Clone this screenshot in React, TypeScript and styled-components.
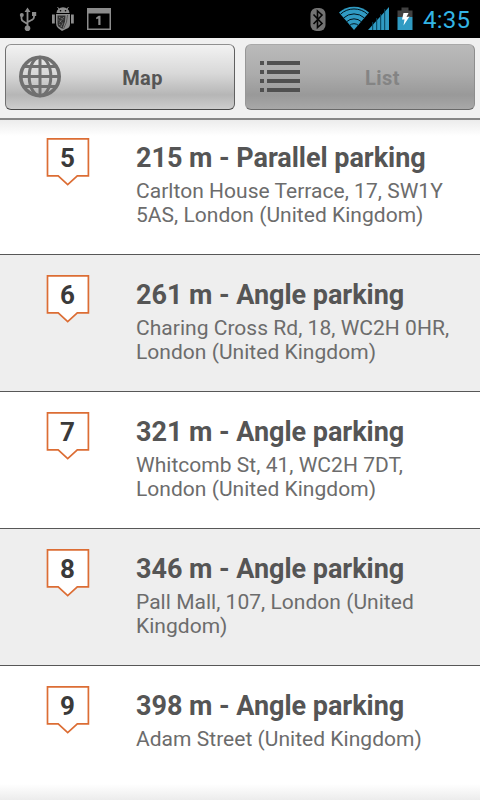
import React from "react";
import styled, { createGlobalStyle } from "styled-components";

const GlobalStyle = createGlobalStyle`
  * { box-sizing: border-box; }
  body { margin: 0; background: #fff; font-family: Roboto, "Liberation Sans", sans-serif; }
`;

const Screen = styled.div`
  width: 480px;
  height: 800px;
  display: flex;
  flex-direction: column;
  overflow: hidden;
  background: #fff;
`;

const StatusBar = styled.header`
  height: 38px;
  flex: none;
  display: flex;
  justify-content: space-between;
  background: #000;
`;

const StatusGroup = styled.div`
  display: flex;
  height: 38px;
`;

const Clock = styled.time`
  width: 57px;
  font-size: 24px;
  line-height: 40px;
  letter-spacing: 0.2px;
  color: #33b5e5;
`;

const Tabs = styled.nav`
  height: 82px;
  flex: none;
  display: flex;
  gap: 10px;
  padding: 6px 5px 8px;
  background: #f0f0f0;
  border-bottom: 2px solid #868686;
`;

const Tab = styled.button<{ $active: boolean }>`
  width: 230px;
  height: 66px;
  display: flex;
  align-items: center;
  padding: 0 0 0 13px;
  border: 1px solid;
  border-color: ${(p) => (p.$active ? "#a9a9a9 #8d8d8d #696969 #979797" : "#909090 #606060 #484848 #707070")};
  border-radius: 6px;
  background: ${(p) =>
    p.$active
      ? "linear-gradient(#bababa 0%, #acacac 45%, #999 78%, #a8a8a8 100%)"
      : "linear-gradient(#f2f2f2 0%, #d8d8d8 45%, #b6b6b6 78%, #cdcdcd 100%)"};
  color: ${(p) => (p.$active ? "#848484" : "#555")};
  font: bold 20px/24px Roboto, "Liberation Sans", sans-serif;
  letter-spacing: 0.4px;
`;

const TabLabel = styled.span`
  flex: 1;
  padding: 2px 0 0 10px;
  margin-right: 20px;
  text-align: center;
`;

const ListView = styled.main`
  position: relative;
  flex: 1;
  overflow: hidden;
`;

const Fade = styled.div<{ $edge: "top" | "bottom" }>`
  position: absolute;
  left: 0;
  right: 0;
  ${(p) => p.$edge}: 0;
  height: 16px;
  background: linear-gradient(to ${(p) => p.$edge}, rgba(235, 235, 235, 0), #ececec);
`;

const Places = styled.ul`
  list-style: none;
  margin: -2px 0 0;
  padding: 0;
`;

const Place = styled.li<{ $shaded: boolean }>`
  height: 137px;
  display: grid;
  grid-template-columns: 136px 1fr;
  border-bottom: 1px solid #575757;
  background: ${(p) => (p.$shaded ? "#eee" : "#fff")};
  &:last-child { border-bottom: 0; }
`;

const PinCell = styled.div`
  padding: 20px 0 0 46px;
`;

const Pin = styled.div`
  display: grid;
  width: 44px;
  height: 50px;
  & > * { grid-area: 1 / 1; }
`;

const PinNumber = styled.span`
  padding-right: 1px;
  text-align: center;
  font: bold 26px/41px Roboto, "Liberation Sans", sans-serif;
  color: #3a3a3a;
`;

const Details = styled.div`
  padding: 24px 0 0;
`;

const Title = styled.h2`
  margin: 0 0 5px;
  font-size: 27px;
  line-height: 32px;
  font-weight: bold;
  letter-spacing: -0.04px;
  color: #555;
  white-space: nowrap;
`;

const Address = styled.p`
  margin: 0;
  font-size: 21px;
  line-height: 24px;
  letter-spacing: 0.03px;
  color: #6c6c6c;
  white-space: pre;
`;

const places = [
  { n: 5, title: "215 m - Parallel parking", address: "Carlton House Terrace, 17, SW1Y\n5AS, London (United Kingdom)" },
  { n: 6, title: "261 m - Angle parking", address: "Charing Cross Rd, 18, WC2H 0HR,\nLondon (United Kingdom)" },
  { n: 7, title: "321 m - Angle parking", address: "Whitcomb St, 41, WC2H 7DT,\nLondon (United Kingdom)" },
  { n: 8, title: "346 m - Angle parking", address: "Pall Mall, 107, London (United\nKingdom)" },
  { n: 9, title: "398 m - Angle parking", address: "Adam Street (United Kingdom)" },
];

const NotificationIcons = () => (
  <svg width="120" height="38" viewBox="0 0 120 38" fill="#8c8c8c">
    <path
      d="M27.500 27V11M21.500 15v3.500q0 2 2 3l4 2.500M34 14v3q0 2-2 2.800l-4.500 2.500"
      fill="none"
      stroke="#8c8c8c"
      strokeWidth="1.800"
    />
    <path d="M27.500 7.500l3 4.500h-6zM32 12h4.200v4H32z" />
    <circle cx="21.800" cy="15" r="2" />
    <circle cx="27.500" cy="28.200" r="2.800" />
    <path d="M56.500 13a6.500 5.800 0 0 1 13 0zM52 14.500h2.800v9H52zM71 14.500h2.800v9H71zM56 14h14v10q0 4-4 5l-4 2-4-3q-2-2-2-5z" />
    <path d="M59 9l-1.500-2M67 9l1.500-2" stroke="#8c8c8c" />
    <circle cx="60.500" cy="10.800" r=".8" fill="#000" />
    <circle cx="65.500" cy="10.800" r=".8" fill="#000" />
    <path d="M57.500 15.500h8l-.5 6-2.500 7.500-4-2.500q-1-1-1-3z" fill="#303030" />
    <path d="M59 17l5 3M58.500 20l4 3M64 17l-5 6M61 27l2-4M59 24l3 2" stroke="#858585" strokeDasharray="1 1" />
    <path d="M67.500 15l-1 7-3 7" stroke="#444" fill="none" strokeWidth=".8" />
    <path fillRule="evenodd" d="M87 8h24v22H87zM88.500 13.500v15h21v-15z" />
    <path d="M96.200 17.500l2.500-1.800h1.800V25h-2.200v-6.500l-2.100.8z" />
  </svg>
);

const SystemIcons = () => (
  <svg width="118" height="38" viewBox="305 0 118 38">
    <rect x="310.500" y="8" width="15" height="23" rx="6" fill="#737373" />
    <path d="M313.500 14.500l8.500 9-4.500 4V11l4.500 4-8.500 9" fill="none" stroke="#050505" strokeWidth="1.600" />
    <path d="M339 12.500a22.500 22.500 0 0 1 30 0L354 30z" fill="#309bc3" />
    <path
      d="M340.500 14.200a20 20 0 0 1 27 0M343.500 18a15.500 15.500 0 0 1 21 0M346.500 21.800a11 11 0 0 1 15 0M349.500 25.500a6.500 6.500 0 0 1 9 0"
      fill="none"
      stroke="#00131c"
      strokeWidth="1"
    />
    <path d="M368 30L389 7v23z" fill="#309bc3" />
    <path d="M372.700 22v8M376.700 18v12M380.700 14v16M384.700 9v21" stroke="#064057" strokeWidth="1" />
    <path d="M397.500 10.500h4V7.500h7v3h4V17h-15z" fill="#414141" />
    <path d="M397.500 17h15v13h-15z" fill="#309bc3" />
    <path d="M403.500 13h5l-2 4 3-.5-6 9 1-6h-2.500z" fill="#fff" />
  </svg>
);

const GlobeIcon = () => (
  <svg width="42" height="44" viewBox="0 0 42 44" fill="none" stroke="#707070">
    <circle cx="21" cy="21.500" r="19.200" strokeWidth="3.600" />
    <ellipse cx="21" cy="21.500" rx="10.800" ry="19.200" strokeWidth="3" />
    <path d="M21 2v39M2 21.500h38M5 11.500h32M5 31.500h32" strokeWidth="3" />
  </svg>
);

const ListIcon = () => (
  <svg width="42" height="42" viewBox="0 0 42 42" fill="#505050">
    {[5, 14, 23, 32].map((y) => (
      <path key={y} d={`M1 ${y}h4v4H1zM8 ${y}h33v4H8z`} />
    ))}
  </svg>
);

const PinOutline = () => (
  <svg width="44" height="50" viewBox="0 0 44 50">
    <path d="M1.500 .9h40.900v37H31.300L21.700 46.700 12.200 37.900H1.500z" fill="#fff" stroke="#dc6d34" strokeWidth="1.700" />
  </svg>
);

export default function App() {
  return (
    <Screen>
      <GlobalStyle />
      <StatusBar>
        <StatusGroup>
          <NotificationIcons />
        </StatusGroup>
        <StatusGroup>
          <SystemIcons />
          <Clock>4:35</Clock>
        </StatusGroup>
      </StatusBar>
      <Tabs>
        <Tab $active={false}>
          <GlobeIcon />
          <TabLabel>Map</TabLabel>
        </Tab>
        <Tab $active>
          <ListIcon />
          <TabLabel>List</TabLabel>
        </Tab>
      </Tabs>
      <ListView>
        <Places>
          {places.map((p) => (
            <Place key={p.n} $shaded={p.n % 2 === 0}>
              <PinCell>
                <Pin>
                  <PinOutline />
                  <PinNumber>{p.n}</PinNumber>
                </Pin>
              </PinCell>
              <Details>
                <Title>{p.title}</Title>
                <Address>{p.address}</Address>
              </Details>
            </Place>
          ))}
        </Places>
        <Fade $edge="top" />
        <Fade $edge="bottom" />
      </ListView>
    </Screen>
  );
}
